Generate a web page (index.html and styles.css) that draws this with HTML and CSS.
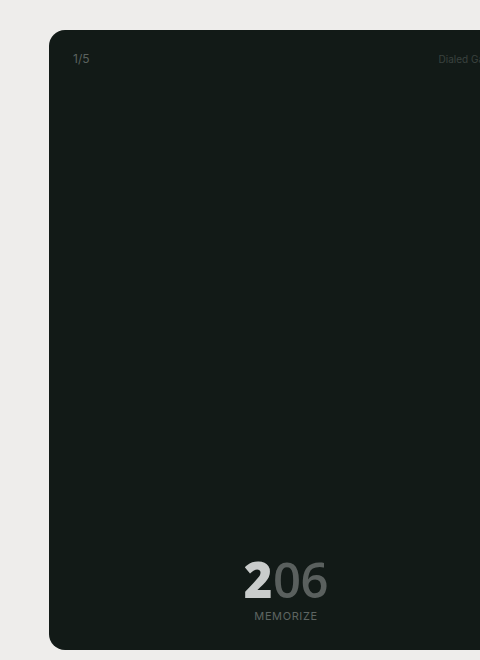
FILE: index.html
```html
<!DOCTYPE html>
<html>
<head>
<meta charset="utf-8">
<link rel="stylesheet" href="styles.css">
</head>
<body>
<div class="page">
  <div class="card">
    <div class="top">
      <span class="count">1/5</span>
      <span class="brand">Dialed Gauge</span>
    </div>
    <div class="bottom">
      <div class="number"><span class="on">2</span><span class="off">06</span></div>
      <div class="label">MEMORIZE</div>
    </div>
  </div>
</div>
</body>
</html>
```
FILE: styles.css
```css
html, body {
  margin: 0;
  padding: 0;
  background: #eeedeb;
  overflow: hidden;
  height: 660px;
}
.page {
  padding: 30px 0 0 49px;
  width: 600px;
}
.card {
  box-sizing: border-box;
  width: 474px;
  height: 620px;
  background: #121a17;
  border-radius: 16px;
  padding: 21px 21px 27px 24px;
  display: flex;
  flex-direction: column;
  justify-content: space-between;
  font-family: Inter, "Liberation Sans", sans-serif;
}
.top {
  display: flex;
  justify-content: space-between;
  align-items: center;
}
.count {
  font-size: 12px;
  line-height: 16px;
  color: #5b625f;
}
.brand {
  font-size: 10px;
  line-height: 16px;
  color: #3a423f;
}
.bottom {
  display: flex;
  flex-direction: column;
  align-items: center;
  padding-right: 3px;
}
.number {
  display: flex;
  font-family: "Open Sans", Inter, sans-serif;
  font-size: 49px;
  line-height: 50px;
  letter-spacing: -0.5px;
}
.on {
  color: #c9cccb;
  font-weight: 800;
  padding-right: 1px;
}
.off {
  color: #5a605e;
  font-weight: 600;
}
.label {
  margin-top: 5px;
  font-size: 11px;
  line-height: 14px;
  letter-spacing: 0.6px;
  color: #5e6562;
}
```
